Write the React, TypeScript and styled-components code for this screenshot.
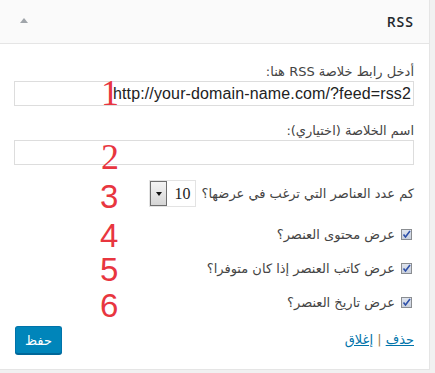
import React from "react";
import styled, { createGlobalStyle } from "styled-components";

const GlobalStyle = createGlobalStyle`
  html, body {
    margin: 0;
    padding: 0;
    background: #f1f1f1;
  }
  body {
    font-family: "DejaVu Sans", Tahoma, sans-serif;
    color: #444;
  }
`;

const Widget = styled.div`
  position: relative;
  direction: rtl;
  width: 429px;
  background: #fff;
  border-right: 1px solid #e5e5e5;
  border-bottom: 1px solid #e5e5e5;
`;

const Header = styled.div`
  height: 44px;
  box-sizing: border-box;
  display: flex;
  align-items: center;
  justify-content: space-between;
  padding: 0 15px 0 20px;
  background: #fafafa;
  border-bottom: 1px solid #e5e5e5;
`;

const Title = styled.h3`
  margin: 0;
  font-family: "Open Sans", sans-serif;
  font-size: 14px;
  font-weight: 600;
  letter-spacing: 1px;
  color: #23282d;
`;

const Toggle = styled.span`
  width: 0;
  height: 0;
  margin-bottom: 3px;
  border-left: 4px solid transparent;
  border-right: 4px solid transparent;
  border-bottom: 5px solid #a0a5aa;
`;

const Body = styled.div`
  padding: 19px 15px 15px;
  font-size: 13px;
`;

const Label = styled.label`
  display: block;
  font-size: 13px;
  line-height: 18px;
  color: #444;
`;

const TextField = styled.input`
  display: block;
  width: 400px;
  height: 25px;
  box-sizing: border-box;
  margin: 0 0 16px;
  padding: 0 2px;
  border: 1px solid #ddd;
  background: #fff;
  font-family: "Liberation Sans", Arial, sans-serif;
  font-size: 16px;
  letter-spacing: 0.13px;
  color: #222;
  outline: none;
  direction: rtl;
`;

const CountRow = styled.div`
  display: flex;
  align-items: center;
  gap: 5px;
  height: 27px;
  margin-top: -1px;
  font-size: 13px;
  color: #444;
`;

const Select = styled.div`
  display: flex;
  align-items: center;
  direction: ltr;
  width: 47px;
  height: 27px;
  box-sizing: border-box;
  border: 1px solid #e3e3e3;
  background: #fff;
`;

const SelectArrow = styled.span`
  display: flex;
  align-items: center;
  justify-content: center;
  width: 17px;
  height: 25px;
  box-sizing: border-box;
  border: 1px solid #6e6e6e;
  background: linear-gradient(#f4f4f4, #d5d5d5);
  &::after {
    content: "";
    border-left: 3px solid transparent;
    border-right: 3px solid transparent;
    border-top: 4px solid #111;
  }
`;

const SelectValue = styled.span`
  padding-left: 7px;
  font-family: "Liberation Serif", serif;
  font-size: 16px;
  color: #222;
`;

const CheckRow = styled.label<{ $first?: boolean }>`
  display: flex;
  align-items: center;
  gap: 6px;
  height: 20px;
  margin-top: ${(p) => (p.$first ? 17 : 14)}px;
  font-size: 13px;
  color: #444;
`;

const Box = styled.span`
  display: inline-flex;
  width: 11px;
  height: 11px;
  box-sizing: border-box;
  margin-right: 2px;
  border: 1px solid #8a8d91;
  background: linear-gradient(#dfe4ee, #c9d0dc);
`;

const Footer = styled.div`
  display: flex;
  align-items: center;
  justify-content: space-between;
  margin-top: 14px;
`;

const Links = styled.div`
  font-size: 13px;
  color: #a08050;
  padding-bottom: 2px;
`;

const Link = styled.a`
  color: #0073aa;
  text-decoration: underline;
`;

const SaveButton = styled.button`
  width: 47px;
  height: 28px;
  box-sizing: border-box;
  padding: 0;
  border: 1px solid #0073aa;
  border-bottom-color: #006799;
  border-radius: 3px;
  background: #0085ba;
  color: #fff;
  font-family: "DejaVu Sans", Tahoma, sans-serif;
  font-size: 13px;
  box-shadow: 0 1px 0 #006799;
`;

const Marker = styled.span<{ $serif?: boolean }>`
  position: absolute;
  left: ${(p) => (p.$serif ? 101 : 100)}px;
  font-family: ${(p) => (p.$serif ? '"Liberation Serif", serif' : '"Liberation Sans", sans-serif')};
  font-size: ${(p) => (p.$serif ? 36 : 33)}px;
  line-height: 0.7;
  color: #e8363f;
  direction: ltr;
  pointer-events: none;
`;

const Check = () => (
  <Box>
    <svg width="9" height="9" viewBox="0 0 9 9">
      <path d="M1.5 4.5 L3.5 7 L8 1" fill="none" stroke="#2d4fa8" strokeWidth="1.6" />
    </svg>
  </Box>
);

const markers = [
  { n: "1", top: 81, serif: true },
  { n: "2", top: 145, serif: true },
  { n: "3", top: 185, serif: false },
  { n: "4", top: 224, serif: false },
  { n: "5", top: 258, serif: false },
  { n: "6", top: 294, serif: false },
];

export default function App() {
  return (
    <>
      <GlobalStyle />
      <Widget>
        <Header>
          <Title>RSS</Title>
          <Toggle />
        </Header>
        <Body>
          <Label>أدخل رابط خلاصة RSS هنا:</Label>
          <TextField defaultValue="http://your-domain-name.com/?feed=rss2" />
          <Label>اسم الخلاصة (اختياري):</Label>
          <TextField defaultValue="" />
          <CountRow>
            <span>كم عدد العناصر التي ترغب في عرضها؟</span>
            <Select>
              <SelectArrow />
              <SelectValue>10</SelectValue>
            </Select>
          </CountRow>
          <CheckRow $first>
            <Check />
            عرض محتوى العنصر؟
          </CheckRow>
          <CheckRow>
            <Check />
            عرض كاتب العنصر إذا كان متوفرا؟
          </CheckRow>
          <CheckRow>
            <Check />
            عرض تاريخ العنصر؟
          </CheckRow>
          <Footer>
            <Links>
              <Link href="#">حذف</Link> | <Link href="#">إغلاق</Link>
            </Links>
            <SaveButton>حفظ</SaveButton>
          </Footer>
        </Body>
        {markers.map((m) => (
          <Marker key={m.n} $serif={m.serif} style={{ top: m.top }}>
            {m.n}
          </Marker>
        ))}
      </Widget>
    </>
  );
}
